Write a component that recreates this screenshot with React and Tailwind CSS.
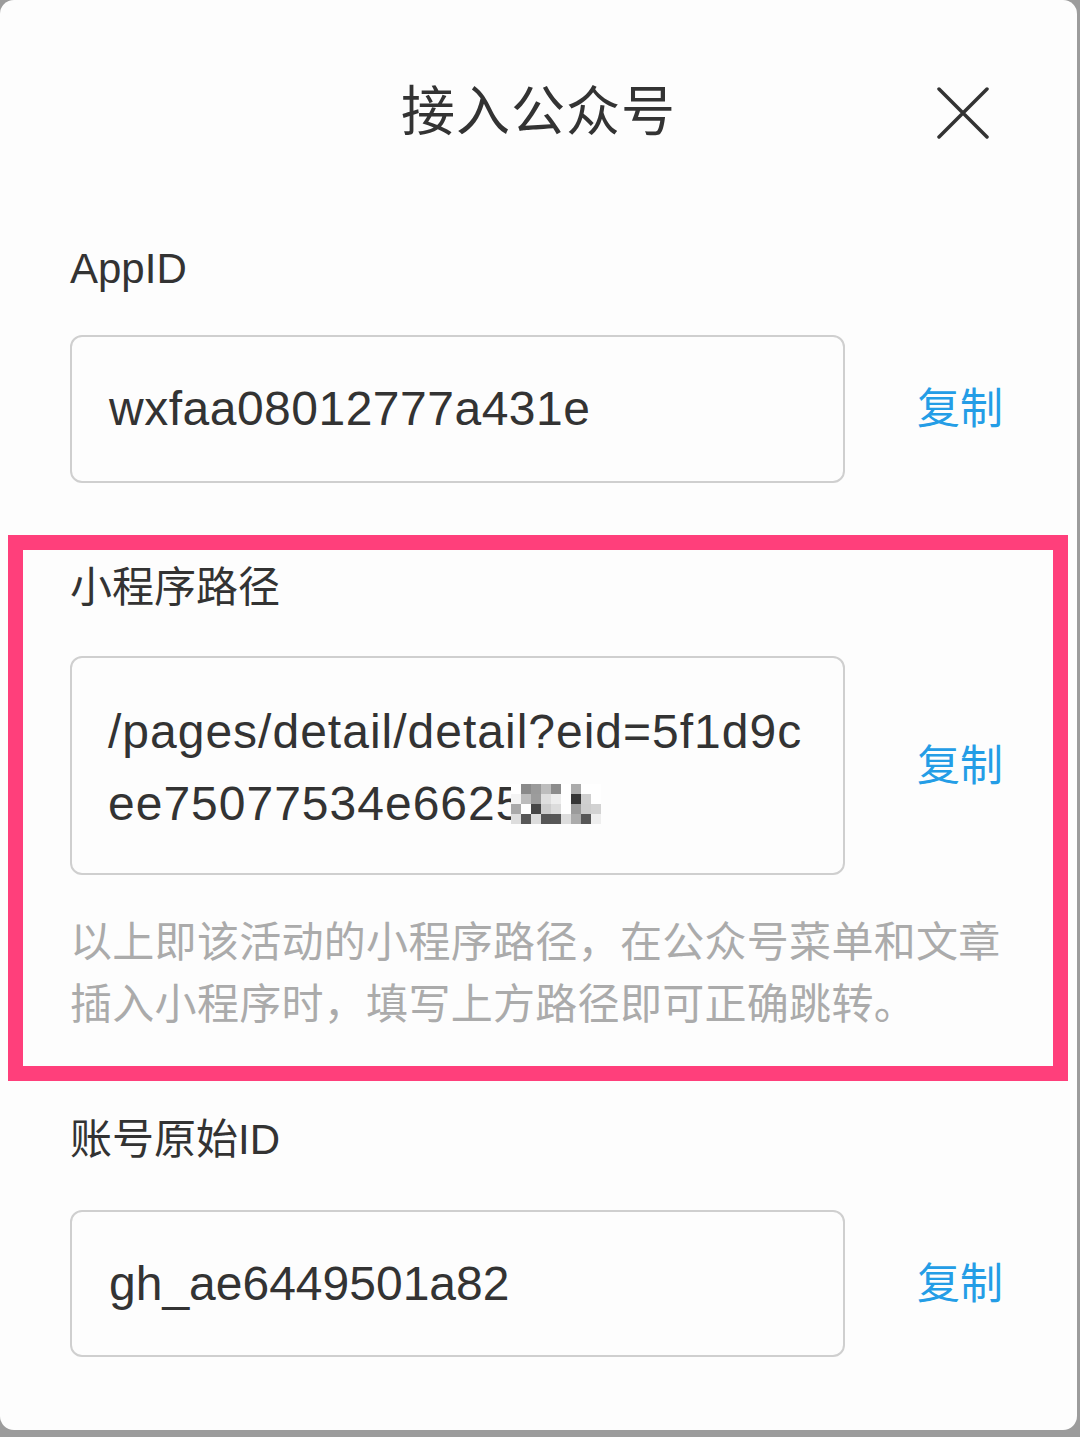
import React from "react";

const FONT = { fontFamily: '"Liberation Sans", "Noto Sans CJK SC", sans-serif' };

const mosaic = [
  ["#ffffff", "#8a8a8a", "#9a9a9a", "#bdbdbd", "#8c8c8c", "#ffffff", "#ababab", "#ffffff", "#ffffff"],
  ["#f4f4f4", "#bcbcbc", "#9c9c9c", "#dedede", "#ededed", "#ffffff", "#353535", "#cfcfcf", "#ffffff"],
  ["#a9a9a9", "#ffffff", "#474747", "#cdcdcd", "#dcdcdc", "#ffffff", "#9b9b9b", "#cdcdcd", "#d2d2d2"],
  ["#dddddd", "#575757", "#dcdcdc", "#565656", "#575757", "#dddddd", "#ababab", "#575757", "#eeeeee"],
];

function Mosaic() {
  return (
    <span className="inline-block overflow-hidden align-[-4px] ml-[-12px]">
      <span className="grid grid-cols-[repeat(9,10px)] grid-rows-[repeat(4,10px)]">
        {mosaic.flat().map((c, i) => (
          <span key={i} className="block w-[10px] h-[10px]" style={{ backgroundColor: c }} />
        ))}
      </span>
    </span>
  );
}

function Copy() {
  return <span className="ml-[72px] text-[43px] leading-[50px] text-[#249de6]">复制</span>;
}

function Label({ children }) {
  return <div className="h-[60px] text-[42px] leading-[60px] text-[#333333]">{children}</div>;
}

export default function App() {
  return (
    <div className="w-[1080px] h-[1437px] bg-[#9c9c9c] overflow-hidden" style={FONT}>
      <div className="w-[1077px] h-[1430px] bg-[#fdfdfd] rounded-[14px] relative">
        {/* header */}
        <div className="h-[224px] flex items-center justify-center">
          <span className="text-[54px] leading-[60px] text-[#333333] tracking-[1px]">接入公众号</span>
        </div>
        <button className="absolute left-[937px] top-[87px] w-[52px] h-[52px]">
          <svg width="52" height="52" viewBox="0 0 52 52">
            <path d="M2 2 L50 50 M50 2 L2 50" stroke="#333333" strokeWidth="3.5" strokeLinecap="round" fill="none" />
          </svg>
        </button>

        {/* AppID */}
        <div className="pl-[70px] mt-[15px]">
          <Label>AppID</Label>
          <div className="mt-[36px] flex items-center">
            <div className="w-[775px] h-[148px] border-2 border-[#cfcfcf] rounded-[12px] pl-[37px] flex items-center text-[48px] text-[#333333] tracking-[0.5px]">
              wxfaa08012777a431e
            </div>
            <Copy />
          </div>
        </div>

        {/* highlighted path */}
        <div className="mt-[52px] ml-[8px] w-[1060px] border-[15px] border-[#ff3f7b] pl-[47px] pt-[8px] pb-[30px]">
          <Label>小程序路径</Label>
          <div className="mt-[38px] flex items-center">
            <div className="w-[775px] h-[219px] border-2 border-[#cfcfcf] rounded-[12px] pl-[36px] pt-[4px] flex flex-col justify-center text-[48px] leading-[72px] text-[#333333] tracking-[1px]">
              <div className="whitespace-nowrap">/pages/detail/detail?eid=5f1d9c</div>
              <div className="whitespace-nowrap">
                ee75077534e6625
                <Mosaic />
              </div>
            </div>
            <Copy />
          </div>
          <div className="mt-[37px] text-[42px] leading-[62px] text-[#ababab] tracking-[0.3px]">
            <div className="whitespace-nowrap">以上即该活动的小程序路径，在公众号菜单和文章</div>
            <div className="whitespace-nowrap">插入小程序时，填写上方路径即可正确跳转。</div>
          </div>
        </div>

        {/* original ID */}
        <div className="pl-[70px] mt-[29px]">
          <Label>账号原始ID</Label>
          <div className="mt-[40px] flex items-center">
            <div className="w-[775px] h-[147px] border-2 border-[#cfcfcf] rounded-[12px] pl-[37px] flex items-center text-[48px] text-[#333333]">
              gh_ae6449501a82
            </div>
            <Copy />
          </div>
        </div>
      </div>
    </div>
  );
}
